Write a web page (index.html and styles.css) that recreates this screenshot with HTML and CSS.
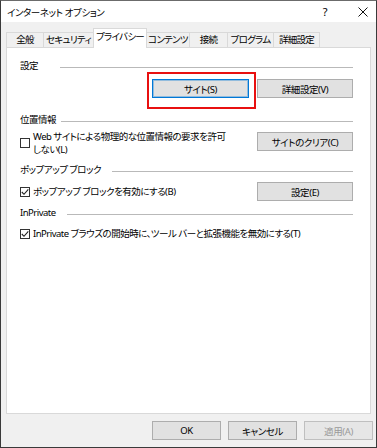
FILE: index.html
```html
<!DOCTYPE html>
<html lang="ja">
<head>
    <meta charset="UTF-8">
    <meta name="viewport" content="width=device-width, initial-scale=1.0">
    <title>インターネット オプション</title>
    <link rel="stylesheet" href="styles.css">
</head>
<body>
    <div class="window">
        <div class="titlebar">
            <span class="title">インターネット オプション</span>
            <span class="help">?</span>
            <svg class="close" width="10" height="10" viewBox="0 0 10 10" fill="none" stroke="#111" stroke-width="1">
                <line x1="0.5" y1="0.5" x2="9.5" y2="9.5"></line>
                <line x1="9.5" y1="0.5" x2="0.5" y2="9.5"></line>
            </svg>
        </div>

        <div class="tabs">
            <div class="tab w38">全般</div>
            <div class="tab w51">セキュリティ</div>
            <div class="tab active w54">プライバシー</div>
            <div class="tab w44">コンテンツ</div>
            <div class="tab w39">接続</div>
            <div class="tab w47">プログラム</div>
            <div class="tab w47">詳細設定</div>
        </div>

        <div class="panel">
            <div class="section-head head-settings">
                <span>設定</span>
                <div class="rule"></div>
            </div>
            <div class="row row-settings">
                <span class="mark">
                    <button class="btn focused">サイト(S)</button>
                </span>
                <button class="btn side">詳細設定(V)</button>
            </div>

            <div class="section-head head-location">
                <span>位置情報</span>
                <div class="rule"></div>
            </div>
            <div class="row row-location">
                <label class="check">
                    <span class="box"></span>
                    <span class="text">Web サイトによる物理的な位置情報の要求を許可<br>しない(L)</span>
                </label>
                <button class="btn side">サイトのクリア(C)</button>
            </div>

            <div class="section-head head-popup">
                <span>ポップアップ ブロック</span>
                <div class="rule"></div>
            </div>
            <div class="row row-popup">
                <label class="check">
                    <span class="box checked">
                        <svg width="8" height="8" viewBox="0 0 8 8" fill="none" stroke="#222" stroke-width="1.1">
                            <polyline points="0.8 4 3 6.3 7.3 1.3"></polyline>
                        </svg>
                    </span>
                    <span class="text">ポップアップ ブロックを有効にする(B)</span>
                </label>
                <button class="btn side">設定(E)</button>
            </div>

            <div class="section-head head-private">
                <span>InPrivate</span>
                <div class="rule"></div>
            </div>
            <div class="row row-private">
                <label class="check">
                    <span class="box checked">
                        <svg width="8" height="8" viewBox="0 0 8 8" fill="none" stroke="#222" stroke-width="1.1">
                            <polyline points="0.8 4 3 6.3 7.3 1.3"></polyline>
                        </svg>
                    </span>
                    <span class="text">InPrivate ブラウズの開始時に、ツール バーと拡張機能を無効にする(T)</span>
                </label>
            </div>
        </div>

        <div class="footer">
            <button class="btn foot">OK</button>
            <button class="btn foot">キャンセル</button>
            <button class="btn foot disabled">適用(A)</button>
        </div>
    </div>
</body>
</html>
```

FILE: styles.css
```css
:root {
    --window-bg: #f0f0f0;
    --line: #d9d9d9;
    --btn-bg: #e1e1e1;
    --btn-border: #adadad;
    --accent: #0078d7;
    --text: #000;
}
body {
    margin: 0;
    padding: 0;
    font-family: "Noto Sans", "Noto Sans CJK JP", sans-serif;
    font-size: 9.5px;
    letter-spacing: -0.5px;
    font-feature-settings: "palt";
    color: var(--text);
}
.window {
    width: 377px;
    height: 448px;
    box-sizing: border-box;
    border: 1px solid #3a3a3a;
    border-top-color: #6b6b6b;
    background: var(--window-bg);
    display: flex;
    flex-direction: column;
}
.titlebar {
    height: 21px;
    background: #fff;
    display: flex;
    align-items: center;
    padding-left: 6px;
    padding-right: 8px;
}
.title {
    flex: 1;
    letter-spacing: -0.4px;
}
.help {
    font-size: 11px;
    margin-right: 31px;
}
.close {
    display: block;
}

/* onglets */
.tabs {
    display: flex;
    align-items: flex-end;
    height: 19px;
    margin-top: 6px;
    padding-left: 5px;
}
.tab {
    box-sizing: border-box;
    height: 15px;
    border: 1px solid var(--line);
    border-bottom: none;
    margin-left: -1px;
    background: var(--window-bg);
    display: flex;
    align-items: center;
    justify-content: center;
    white-space: nowrap;
    line-height: 1;
    letter-spacing: -0.7px;
}
.tab:first-child {
    margin-left: 0;
}
.tab.active {
    height: 20px;
    margin-bottom: -1px;
    background: #fff;
    padding-bottom: 3px;
    position: relative;
    z-index: 1;
}
.w38 { width: 38px; }
.w39 { width: 39px; }
.w44 { width: 44px; }
.w47 { width: 47px; }
.w51 { width: 51px; }
.w54 { width: 54px; }

/* panneau */
.panel {
    box-sizing: border-box;
    height: 367px;
    margin: 0 5px 0 5px;
    border: 1px solid var(--line);
    background: #fff;
    padding: 0 17px 0 13px;
}
.section-head {
    display: flex;
    align-items: center;
    height: 12px;
    line-height: 12px;
    white-space: nowrap;
}
.rule {
    flex: 1;
    height: 1px;
    background: #b9b9b9;
    margin-left: 11px;
    margin-top: 2px;
}
.head-settings { margin-top: 12px; }
.head-settings .rule { margin-left: 22px; }
.head-location { margin-top: 5px; }
.head-location .rule { margin-left: 5px; }
.head-popup { margin-top: 8px; }
.head-private { margin-top: 6px; }

.row {
    display: flex;
    justify-content: space-between;
    align-items: flex-start;
}
.row-settings {
    justify-content: flex-end;
}
.row-location { margin-top: 4px; }
.row-location .btn { margin-top: 2px; }
.row-popup {
    margin-top: 6px;
    align-items: center;
}
.row-private { margin-top: 8px; }

.mark {
    display: block;
    border: 2px solid #e81010;
    padding: 5px 5px 9px 3px;
    margin-right: 1px;
}
.row-settings .side {
    margin-top: 7px;
}

/* boutons */
.btn {
    box-sizing: border-box;
    height: 19px;
    margin: 0;
    padding: 0;
    border: 1px solid var(--btn-border);
    background: var(--btn-bg);
    font-family: inherit;
    font-size: 9.5px;
    letter-spacing: -0.4px;
    font-feature-settings: "palt";
    color: var(--text);
    white-space: nowrap;
}
.btn.focused {
    width: 97px;
    border-color: var(--accent);
    box-shadow: inset 0 0 0 1px rgba(0, 120, 215, 0.35);
}
.btn.side {
    width: 96px;
}
.btn.foot {
    width: 69px;
}
.btn.disabled {
    color: #9a9a9a;
    border-color: #bfbfbf;
    background: #e6e6e6;
}

/* cases à cocher */
.check {
    display: flex;
    align-items: center;
    line-height: 13px;
    white-space: nowrap;
}
.box {
    box-sizing: border-box;
    width: 10px;
    height: 10px;
    border: 1px solid #333;
    background: #fff;
    margin-right: 3px;
    display: flex;
    align-items: center;
    justify-content: center;
    flex-shrink: 0;
}

.footer {
    flex: 1;
    display: flex;
    justify-content: flex-end;
    align-items: flex-start;
    gap: 7px;
    padding-top: 7px;
    padding-right: 3px;
}
```
